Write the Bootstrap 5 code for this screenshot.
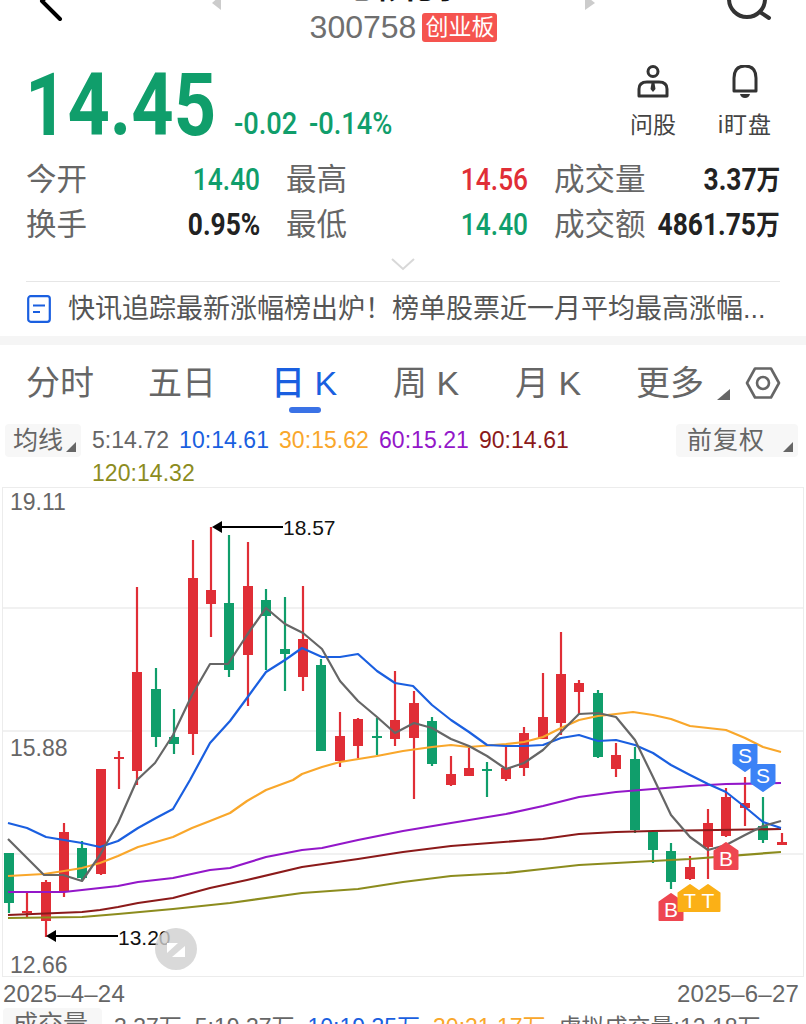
<!DOCTYPE html>
<html lang="zh-CN">
<head>
<meta charset="UTF-8" />
<meta name="viewport" content="width=device-width, initial-scale=1" />
<title>七彩化学 300758</title>
<link href="https://cdn.jsdelivr.net/npm/bootstrap@5.3.2/dist/css/bootstrap.min.css" rel="stylesheet" />
<style>
    html, body { height: 1024px; overflow: hidden; background: #fff; }
    body { font-family: "Liberation Sans", "Noto Sans CJK SC", sans-serif; color: #666; }
    a { text-decoration: none; }
    .page-scrolled { margin-top: -40px; width: 806px; }
    .din { font-family: "Roboto", "Noto Sans CJK SC", sans-serif; display: inline-block; transform: scaleX(.85); transform-origin: right center; }
    .up { color: #e02e36; }
    .down { color: #109e6b; }

    /* header */
    .top-bar { height: 86px; }
    .top-left { width: 212px; }
    .top-right { width: 211px; }
    .stock-name { height: 46px; margin-top: 5px; width: 383px; }
    .stock-name b { font-size: 30px; line-height: 46px; color: #111; }
    .stock-code { height: 32px; font-size: 32px; line-height: 32px; color: #6f6f6f; }
    .board-tag { background: #f5544f; color: #fff; font-size: 23px; line-height: 29px; height: 29px; width: 75px; border-radius: 3px; margin-left: 6px; text-align: center; }

    /* quote */
    .quote-row { height: 99px; padding-left: 25px; }
    .price-big { font-size: 87px; line-height: 80px; font-weight: 700; width: 209px; transform-origin: left center; }
    .price-change { font-size: 31px; line-height: 34px; font-weight: 500; }
    .price-change .din { transform: scaleX(.88); transform-origin: left center; }
    .change-abs { width: 75px; }
    .quick-link { font-size: 23px; line-height: 28px; color: #444; text-align: center; margin-bottom: 6px; }
    .quick-ask { width: 88px; margin-left: auto; }
    .quick-watch { width: 90px; margin-left: 3px; margin-right: 16px; letter-spacing: 1px; }
    .quick-link svg { display: block; margin: 0 auto 10px; }

    /* stats */
    .stat-grid { display: grid; grid-template-columns: 234px 242px 226px; column-gap: 26px; padding-left: 26px; height: 90px; margin-top: 12px; }
    .stat-cell { height: 45px; }
    .stat-label { font-size: 30.5px; color: #666; white-space: nowrap; flex: none; }
    .stat-value { font-size: 31px; line-height: 45px; font-weight: 500; white-space: nowrap; flex: none; margin-left: -30px; }
    .stat-dark { color: #222; font-weight: 700; }
    .stat-wan { font-size: 28px; }
    .more-chevron { height: 34px; }
    .rule-line { height: 1px; background: #e6e6e6; margin: 0 26px; }
    .news-row { height: 54px; padding-left: 27px; font-size: 27px; color: #555; white-space: nowrap; }
    .news-row svg { margin-right: 17px; flex: none; }
    .gap-band { height: 9px; background: #f5f5f5; }

    /* tabs */
    .period-tabs { height: 79px; margin-left: -1px; flex-wrap: nowrap; }
    .period-tab { flex: 0 0 122px; text-align: center; font-size: 34px; line-height: 76px; color: #666; height: 74px; position: relative; }
    .period-tab.is-on { color: #1a5fe0; font-weight: 500; }
    .period-tab.is-on::after { content: ""; position: absolute; left: 46px; bottom: 6px; width: 32px; height: 6px; border-radius: 3px; background: #3a72e6; }
    .corner-tri { display: inline-block; width: 13px; height: 11px; background: #666; clip-path: polygon(100% 0, 100% 100%, 0 100%); }
    .tab-gear { margin: 21px 0 0 14px; flex: none; }
    .tab-more-tri { position: absolute; right: 1px; bottom: 19px; }

    /* moving averages */
    .ma-row { height: 63px; }
    .pick-btn { background: #f7f7f7; border-radius: 4px; font-size: 25px; color: #666; height: 33px; line-height: 33px; padding: 0 0 0 8px; position: relative; }
    .pick-btn .corner-tri { position: absolute; right: 5px; bottom: 5px; width: 10px; height: 10px; }
    .pick-ma { width: 76px; margin-left: 5px; }
    .pick-adj { width: 122px; margin-left: auto; margin-right: 8px; padding-left: 11px; letter-spacing: 1px; }
    .ma-legend { width: 500px; margin-left: 11px; font-size: 23px; line-height: 33px; column-gap: 10px; letter-spacing: .05px; }
    .ma5 { color: #666; } .ma10 { color: #1a5fe0; } .ma30 { color: #f9a72b; }
    .ma60 { color: #9317c9; } .ma90 { color: #8b1a1a; } .ma120 { color: #8c8c1e; }

    /* chart */
    .kline-chart { display: block; width: 806px; height: 490px; }
    .date-row { height: 31px; font-size: 24px; line-height: 34px; padding: 0 7px 0 3px; letter-spacing: .2px; }
    .vol-row { font-size: 23px; line-height: 30px; white-space: nowrap; }
    .pick-vol { width: 99px; margin-left: 3px; padding-left: 10px; margin-right: 12px; flex: none; height: 40px; }
    .vol-val { margin-right: 13px; padding-top: 4px; }
</style>
</head>
<body>
<div class="page-scrolled">

    <div class="top-bar d-flex">
        <div class="top-left">
            <svg width="80" height="86" viewBox="0 -40 80 86"><path d="M60 19 L42 1 L60 -17" fill="none" stroke="#000" stroke-width="4" stroke-linecap="round" stroke-linejoin="round"/></svg>
        </div>
        <div class="d-flex flex-column align-items-center flex-grow-1">
            <div class="stock-name d-flex justify-content-between">
                <svg width="9" height="46" viewBox="212 -35 9 46"><polygon points="221,-5 212,3 221,10" fill="#ccc"/></svg>
                <b>七彩化学</b>
                <svg width="10" height="46" viewBox="585 -35 10 46"><polygon points="585,-5 595,3 585,10" fill="#ccc"/></svg>
            </div>
            <div class="stock-code d-flex align-items-center">300758<span class="board-tag">创业板</span></div>
        </div>
        <div class="top-right d-flex justify-content-end">
            <svg width="60" height="86" viewBox="720 -40 60 86"><circle cx="745" cy="-1" r="18" fill="none" stroke="#333" stroke-width="4"/><path d="M758 12 L767 18" stroke="#333" stroke-width="4" stroke-linecap="round"/></svg>
            <span class="pe-4"></span>
        </div>
    </div>

    <div class="quote-row d-flex align-items-end">
        <div class="price-big din down">14.45</div>
        <div class="price-change down d-flex mb-1"><span class="din change-abs">-0.02</span><span class="din">-0.14%</span></div>
        <div class="quick-link quick-ask">
            <svg width="32" height="36" viewBox="637 66 32 36"><circle cx="653" cy="72.5" r="5" fill="none" stroke="#333" stroke-width="3"/><path d="M639 97 V90 Q639 83 647 83 H659 Q667 83 667 90 V97 Z" fill="none" stroke="#333" stroke-width="3" stroke-linejoin="round"/><path d="M651.5 84 H654.5 L655.5 90 L653 93 L650.5 90 Z" fill="#333"/></svg>
            问股
        </div>
        <div class="quick-link quick-watch">
            <svg width="28" height="36" viewBox="731 66 28 36"><path d="M734 92 V79 Q734 67 745 67 Q756 67 756 79 V92 Z" fill="none" stroke="#333" stroke-width="3" stroke-linejoin="round"/><path d="M740 95 H750 Q749 99 745 99 Q741 99 740 95 Z" fill="#333"/></svg>
            i盯盘
        </div>
    </div>

    <div class="stat-grid">
        <div class="stat-cell d-flex justify-content-between align-items-center"><span class="stat-label">今开</span><span class="stat-value din down">14.40</span></div>
        <div class="stat-cell d-flex justify-content-between align-items-center"><span class="stat-label">最高</span><span class="stat-value din up">14.56</span></div>
        <div class="stat-cell d-flex justify-content-between align-items-center"><span class="stat-label">成交量</span><span class="stat-value din stat-dark">3.37<span class="stat-wan">万</span></span></div>
        <div class="stat-cell d-flex justify-content-between align-items-center"><span class="stat-label">换手</span><span class="stat-value din stat-dark">0.95%</span></div>
        <div class="stat-cell d-flex justify-content-between align-items-center"><span class="stat-label">最低</span><span class="stat-value din down">14.40</span></div>
        <div class="stat-cell d-flex justify-content-between align-items-center"><span class="stat-label">成交额</span><span class="stat-value din stat-dark">4861.75<span class="stat-wan">万</span></span></div>
    </div>

    <div class="more-chevron d-flex justify-content-center align-items-center">
        <svg width="26" height="14" viewBox="0 0 26 14"><path d="M2 2 L13 12 L24 2" fill="none" stroke="#d8d8d8" stroke-width="2"/></svg>
    </div>
    <div class="rule-line"></div>

    <div class="news-row d-flex align-items-center">
        <svg width="24" height="28" viewBox="0 0 24 28"><rect x="1.2" y="1.2" width="21.6" height="25.6" rx="2.5" fill="none" stroke="#1a5fe0" stroke-width="2.2"/><path d="M6 10.5 H18 M6 17 H13" stroke="#1a5fe0" stroke-width="2.2"/></svg>
        <span>快讯追踪最新涨幅榜出炉！榜单股票近一月平均最高涨幅...</span>
    </div>
    <div class="gap-band"></div>

    <div class="nav period-tabs">
        <a class="period-tab">分时</a>
        <a class="period-tab">五日</a>
        <a class="period-tab is-on">日 K</a>
        <a class="period-tab">周 K</a>
        <a class="period-tab">月 K</a>
        <a class="period-tab">更多<span class="corner-tri tab-more-tri"></span></a>
        <svg class="tab-gear" width="36" height="34" viewBox="0 0 36 34"><path d="M10 2.5 H26 L34 17 L26 31.5 H10 L2 17 Z" fill="none" stroke="#666" stroke-width="2.6" stroke-linejoin="round"/><circle cx="18" cy="17" r="6" fill="none" stroke="#666" stroke-width="2.6"/></svg>
    </div>

    <div class="ma-row d-flex align-items-start">
        <div class="pick-btn pick-ma">均线<span class="corner-tri"></span></div>
        <div class="ma-legend d-flex flex-wrap">
            <span class="ma5">5:14.72</span><span class="ma10">10:14.61</span><span class="ma30">30:15.62</span><span class="ma60">60:15.21</span><span class="ma90">90:14.61</span><span class="ma120">120:14.32</span>
        </div>
        <div class="pick-btn pick-adj">前复权<span class="corner-tri"></span></div>
    </div>

    <svg id="kline" class="kline-chart" viewBox="0 487 806 490"></svg>

    <div class="date-row d-flex justify-content-between"><span>2025–4–24</span><span>2025–6–27</span></div>

    <div class="vol-row d-flex align-items-start">
        <div class="pick-btn pick-vol">成交量<span class="corner-tri"></span></div>
        <span class="vol-val">3.37万</span>
        <span class="vol-val">5:19.37万</span>
        <span class="vol-val ma10">10:19.35万</span>
        <span class="vol-val ma30">30:21.17万</span>
        <span class="vol-val">虚拟成交量:12.18万</span>
    </div>
</div>

<script>
// [x, 影线上, 影线下, 实体上, 实体下, 涨跌]
const candles = [
    [9,853,913,853,903,0],[27,893,917,911,913,1],[46,880,937,882,921,1],[64,823,897,832,891,1],
    [82,841,880,848,878,0],[101,769,875,769,874,1],[119,751,789,757,759,1],[137,587,785,672,771,1],
    [156,668,747,689,737,0],[174,709,754,737,744,0],[193,540,755,578,734,1],[211,527,637,590,604,1],
    [229,535,677,603,670,0],[248,542,706,586,655,1],[266,589,670,600,616,0],[285,597,691,649,654,0],
    [303,586,691,639,677,1],[321,659,751,665,751,0],[340,712,767,736,761,1],[358,718,758,719,746,1],
    [377,718,755,736,738,0],[395,671,746,720,739,1],[414,691,799,703,738,1],[432,717,766,721,764,0],
    [451,756,786,774,785,1],[469,748,776,768,776,1],[487,762,797,769,771,0],[506,747,781,768,779,1],
    [524,727,776,733,768,1],[543,673,739,717,739,1],[561,632,735,674,723,1],[579,680,715,683,692,1],
    [598,690,758,693,757,0],[616,743,777,755,769,1],[635,747,833,759,830,0],[653,831,863,832,850,0],
    [671,843,889,851,882,0],[690,856,880,867,879,1],[708,809,879,823,847,1],[726,788,837,797,836,1],
    [745,777,826,803,808,1],[763,797,843,826,840,0],[782,833,845,842,845,1]
];
const lines = {
    '#8c8c1e': [8,918,82,917,118,914,173,909,230,903,302,893,358,889,403,882,451,876,506,873,543,869,579,865,616,863,690,859,781,852],
    '#8b1a1a': [8,915,82,912,100,910,118,907,138,903,173,898,210,888,247,880,302,867,358,859,403,852,451,846,543,839,579,834,616,832,653,831,781,829],
    '#9317c9': [8,892,64,892,82,890,118,886,138,882,173,878,210,870,230,868,266,857,302,850,322,848,358,840,403,831,451,823,506,814,543,806,579,797,616,792,653,789,690,786,726,784,781,783],
    '#f9a72b': [8,876,44,874,64,871,82,868,100,863,118,856,138,847,156,842,173,837,192,828,210,821,230,813,247,801,266,790,293,780,302,774,322,767,340,762,377,756,403,751,432,747,451,745,469,747,506,744,524,742,543,737,561,728,579,720,598,716,616,714,633,712,653,715,671,719,690,726,708,728,726,730,745,738,763,747,781,752],
    '#1a5fe0': [8,823,27,828,46,837,64,840,82,843,100,847,118,841,138,828,156,818,173,809,190,780,210,743,230,721,247,698,266,672,285,660,302,648,322,657,340,657,358,654,377,671,395,683,413,686,432,705,451,720,469,732,487,745,506,746,524,746,543,745,561,738,579,735,598,741,616,740,635,745,653,753,671,765,690,775,708,784,726,792,745,807,763,822,781,828],
    '#666666': [8,839,44,875,63,875,82,881,100,855,118,823,137,780,155,763,173,735,192,695,210,664,228,664,247,635,266,608,285,624,303,633,322,649,340,681,358,701,377,717,395,733,414,723,432,728,451,739,469,746,487,756,506,769,524,763,543,750,561,732,579,714,598,713,616,717,635,740,653,777,671,815,690,837,708,850,726,845,745,835,763,826,781,821]
};

let svg = '<rect x="2.5" y="487.5" width="801" height="489" fill="#fff" stroke="#ececec"/>';
[608, 731, 854].forEach(y => { svg += `<line x1="3" x2="803" y1="${y}" y2="${y}" stroke="#ececec" stroke-width="1.5"/>`; });

candles.forEach(([x, hi, lo, top, bot, isUp]) => {
    const color = isUp ? '#e02e36' : '#109e6b';
    svg += `<line x1="${x}" x2="${x}" y1="${hi}" y2="${lo}" stroke="${color}" stroke-width="2.2"/>`;
    svg += `<rect x="${x - 5}" y="${top}" width="10" height="${Math.max(bot - top, 2)}" fill="${color}"/>`;
});

Object.keys(lines).forEach(color => {
    const pts = lines[color];
    let d = '';
    for (let i = 0; i < pts.length; i += 2) d += (i ? ' L' : 'M') + pts[i] + ' ' + pts[i + 1];
    svg += `<path d="${d}" fill="none" stroke="${color}" stroke-width="2.2" stroke-linejoin="round"/>`;
});

// 价格标签
svg += '<g font-family="Liberation Sans, sans-serif" font-size="23" fill="#666"><text x="10" y="510">19.11</text><text x="10" y="756">15.88</text><text x="10" y="973">12.66</text></g>';
svg += '<path d="M222 527 H283" stroke="#000" stroke-width="2"/><polygon points="212,527 222,521 222,533" fill="#000"/>';
svg += '<text x="283" y="535" font-family="Liberation Sans, sans-serif" font-size="21" fill="#111">18.57</text>';
svg += '<path d="M56 936 H118" stroke="#000" stroke-width="2"/><polygon points="46,936 56,930 56,942" fill="#000"/>';
svg += '<text x="118" y="945" font-family="Liberation Sans, sans-serif" font-size="21" fill="#111">13.20</text>';

// 买卖点标记
function flag(cx, top, label, color, pointDown) {
    const l = cx - 11.5, r = cx + 11.5;
    const d = pointDown
        ? `M${l} ${top + 1} H${r} V${top + 19} L${cx} ${top + 27} L${l} ${top + 19} Z`
        : `M${cx} ${top + 1} L${r} ${top + 9} V${top + 27} H${l} V${top + 9} Z`;
    const ty = pointDown ? top + 19 : top + 24;
    svg += `<path d="${d}" fill="${color}" stroke="${color}" stroke-width="2" stroke-linejoin="round"/>`;
    svg += `<text x="${cx}" y="${ty}" text-anchor="middle" font-family="Liberation Sans, sans-serif" font-size="21" fill="#fff">${label}</text>`;
}
flag(745, 744, 'S', '#3b82f6', true);
flag(763, 764, 'S', '#3b82f6', true);
flag(726, 842, 'B', '#ee4650', false);
flag(671, 893, 'B', '#ee4650', false);
flag(690, 884, 'T', '#fbb016', false);
flag(708, 884, 'T', '#fbb016', false);

// 全屏按钮
svg += '<circle cx="176" cy="949" r="21" fill="#cfcfcf" fill-opacity=".8"/>';
svg += '<polygon points="167,943 178,943 167,953" fill="#fff"/><polygon points="172,957 185,957 185,946" fill="#fff"/>';

document.getElementById('kline').innerHTML = svg;
</script>
<script src="https://cdn.jsdelivr.net/npm/bootstrap@5.3.2/dist/js/bootstrap.bundle.min.js"></script>
</body>
</html>
